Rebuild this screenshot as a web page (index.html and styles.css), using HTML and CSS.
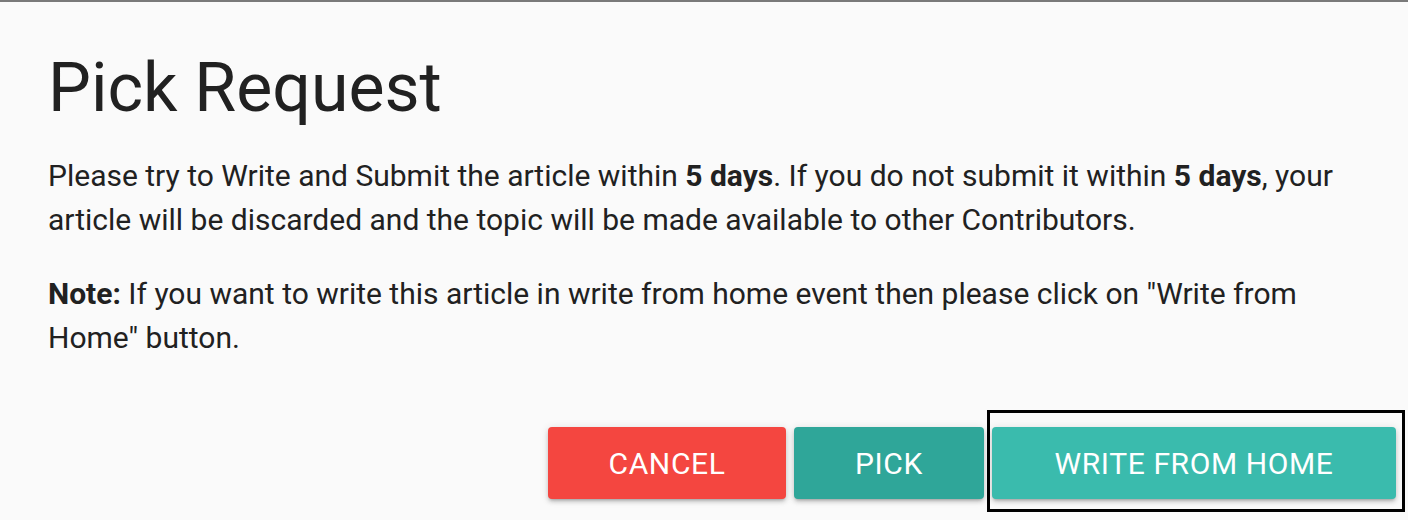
FILE: index.html
```html
<!DOCTYPE html>
<html>
<head>
  <title>Pick Request</title>
  <link rel="stylesheet" href="styles.css">
</head>
<body>

<div class="dialog">
  <h1>Pick Request</h1>

  <div class="dialog-body">
    <p>
      Please try to Write and Submit the article within <b>5 days</b>. If you do not submit it within <b>5 days</b>, your
      article will be discarded and the topic will be made available to other Contributors.
    </p>
    <p>
      <b>Note:</b> If you want to write this article in write from home event then please click on "Write from
      Home" button.
    </p>
  </div>

  <div class="actions">
    <button class="btn btn-cancel">Cancel</button>
    <button class="btn btn-pick">Pick</button>
    <div class="focus-ring">
      <button class="btn btn-home">Write from Home</button>
    </div>
  </div>
</div>

</body>
</html>
```

FILE: styles.css
```css
/* Dialog layout */
body {
  margin: 0;
  background-color: #fafafa;
  color: #212121;
  font-family: Roboto, "Liberation Sans", sans-serif;
}
.dialog {
  height: 520px;
  box-sizing: border-box;
  border-top: 2px solid #7a7a7a;
  padding: 0 3px 0 48px;
}
h1 {
  margin: 0;
  padding-top: 46px;
  font-size: 68px;
  font-weight: 400;
  line-height: 80px;
}
.dialog-body {
  margin-top: 26px;
  padding-right: 20px;
  font-size: 30px;
  line-height: 44px;
}
.dialog-body p {
  margin: 0 0 30px;
}
.dialog-body b {
  font-weight: 700;
}
/* Buttons */
.actions {
  display: flex;
  justify-content: flex-end;
  align-items: flex-start;
  gap: 8px;
  margin-top: 50px;
}
.btn {
  height: 72px;
  border: none;
  border-radius: 4px;
  color: white;
  font-family: Roboto, "Liberation Sans", sans-serif;
  font-size: 30px;
  letter-spacing: 0.6px;
  text-transform: uppercase;
  box-shadow: 0 3px 3px -2px rgba(0,0,0,0.2), 0 3px 4px 0 rgba(0,0,0,0.14), 0 1px 8px 0 rgba(0,0,0,0.12);
  cursor: pointer;
  margin-top: 17px;
}
.btn-cancel {
  width: 238px;
  background-color: #f44640;
}
.btn-pick {
  width: 190px;
  background-color: #2fa699;
}
.focus-ring {
  border: 3px solid black;
  margin-left: -5px;
  padding: 14px 6px 10px 2px;
}
.btn-home {
  width: 404px;
  margin-top: 0;
  background-color: #3abbad;
}
```
